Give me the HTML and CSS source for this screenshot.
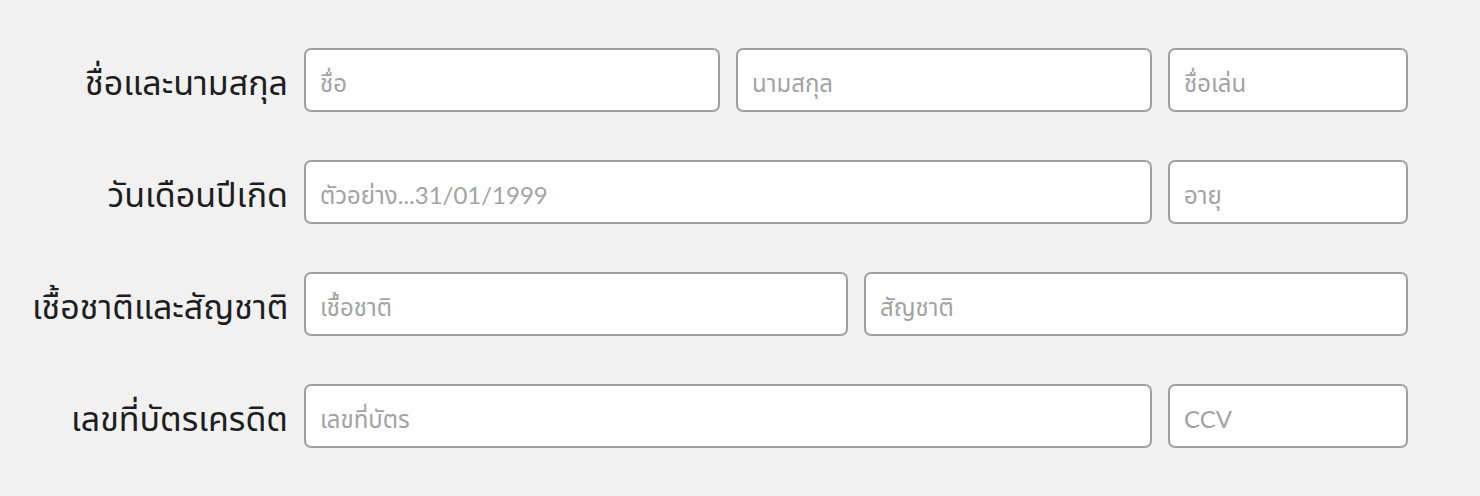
FILE: index.html
```html
<!DOCTYPE html>
<html lang="th">
<head>
<meta charset="utf-8">
<link rel="stylesheet" href="styles.css">
</head>
<body>
<form class="form">
  <div class="row">
    <label class="label">ชื่อและนามสกุล</label>
    <div class="fields f-name">
      <input class="input" placeholder="ชื่อ">
      <input class="input" placeholder="นามสกุล">
      <input class="input" placeholder="ชื่อเล่น">
    </div>
  </div>
  <div class="row">
    <label class="label">วันเดือนปีเกิด</label>
    <div class="fields f-wide">
      <input class="input" placeholder="ตัวอย่าง...31/01/1999">
      <input class="input" placeholder="อายุ">
    </div>
  </div>
  <div class="row">
    <label class="label">เชื้อชาติและสัญชาติ</label>
    <div class="fields f-half">
      <input class="input" placeholder="เชื้อชาติ">
      <input class="input" placeholder="สัญชาติ">
    </div>
  </div>
  <div class="row">
    <label class="label">เลขที่บัตรเครดิต</label>
    <div class="fields f-wide">
      <input class="input" placeholder="เลขที่บัตร">
      <input class="input" placeholder="CCV">
    </div>
  </div>
</form>
</body>
</html>
```
FILE: styles.css
```css
* { box-sizing: border-box; }
html, body { margin: 0; padding: 0; }
body {
  background: #f1f1f1;
  font-family: "Lato", "Noto Sans Thai", sans-serif;
  color: #222;
}
.form {
  display: flex;
  flex-direction: column;
  gap: 48px;
  padding: 48px 72px 0 32px;
}
.row {
  display: grid;
  grid-template-columns: 256px 1fr;
  column-gap: 16px;
  align-items: center;
}
.label {
  text-align: right;
  font-size: 34px;
  font-weight: 400;
  white-space: nowrap;
  color: #1e1e1e;
  padding-top: 8px;
}
.fields {
  display: grid;
  column-gap: 16px;
}
.f-name { grid-template-columns: 416px 416px 240px; }
.f-wide { grid-template-columns: 848px 240px; }
.f-half { grid-template-columns: 544px 544px; }
.input {
  height: 64px;
  width: 100%;
  background: #fff;
  border: 2px solid #a0a0a0;
  border-radius: 7px;
  padding: 4px 14px 0;
  font-family: "Lato", "Noto Sans Thai", sans-serif;
  font-size: 24px;
  color: #222;
  outline: none;
}
.input::placeholder { color: #a3a3a3; }
```
